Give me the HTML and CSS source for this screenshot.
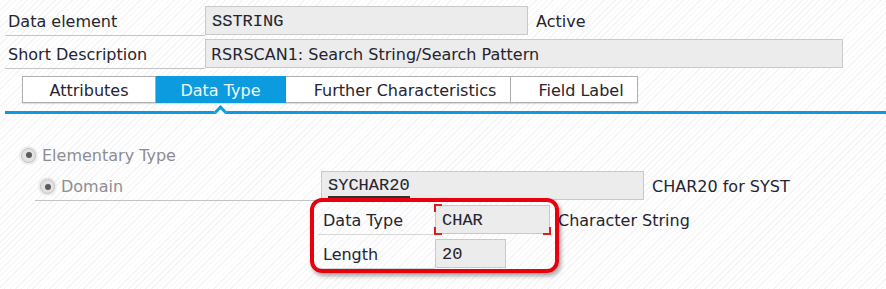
FILE: index.html
```html
<!DOCTYPE html>
<html lang="en">
  <head>
    <meta charset="UTF-8" />
    <meta name="viewport" content="width=device-width, initial-scale=1.0" />
    <title>Data element SSTRING</title>

    <link rel="stylesheet" href="styles.css">
  </head>
  <body>
    <div class="head">
      <div class="row">
        <div class="label">Data element</div>
        <div class="field mono short">SSTRING</div>
        <div class="note">Active</div>
      </div>
      <div class="row">
        <div class="label">Short Description</div>
        <div class="field long">RSRSCAN1: Search String/Search Pattern</div>
      </div>
    </div>

    <div class="tabs">
      <div class="tab t1">Attributes</div>
      <div class="tab t2 active">Data Type</div>
      <div class="tab t3">Further Characteristics</div>
      <div class="tab t4">Field Label</div>
    </div>

    <div class="panel">
      <div class="radio-row elem">
        <span class="radio"></span>
        <span>Elementary Type</span>
      </div>

      <div class="row domain">
        <div class="label">
          <span class="radio"></span>
          <span>Domain</span>
        </div>
        <div class="field mono dom"><span class="link">SYCHAR20</span></div>
        <div class="note">CHAR20 for SYST</div>
      </div>

      <div class="sub">
        <div class="row">
          <div class="label">Data Type</div>
          <div class="field mono type">
            CHAR
            <i class="c tl"></i><i class="c bl"></i><i class="c br"></i>
          </div>
          <div class="note">Character String</div>
        </div>
        <div class="row">
          <div class="label">Length</div>
          <div class="field mono len">20</div>
        </div>
        <div class="mark"></div>
      </div>
    </div>
  </body>
</html>
```

FILE: styles.css
```css
*,
*::before,
*::after {
  box-sizing: border-box;
  margin: 0;
  padding: 0;
}

body {
  width: 886px;
  height: 289px;
  overflow: hidden;
  font-family: "DejaVu Sans", sans-serif;
  font-size: 16px;
  color: #25242f;
  background: repeating-linear-gradient(-45deg, #ffffff 0 3px, #f4f4f6 3px 4px);
}

.head {
  padding: 6px 0 0 5px;
  display: flex;
  flex-direction: column;
  gap: 3px;
}

.row {
  display: flex;
  align-items: stretch;
  height: 30px;
}

.label {
  flex: none;
  width: 200px;
  padding: 2px 0 0 3px;
  display: flex;
  align-items: center;
  border-bottom: 1px solid #c4c4c4;
  white-space: nowrap;
}

.field {
  flex: none;
  display: flex;
  align-items: center;
  padding: 2px 0 0 5px;
  background: #ececec;
  border: 1px solid #c9c9c9;
  height: 29px;
}

.mono {
  font-family: "Liberation Mono", monospace;
  font-size: 17px;
  padding-left: 6px;
  -webkit-text-stroke: 0.1px #25242f;
}

.short {
  width: 323px;
}

.long {
  width: 638px;
}

.note {
  display: flex;
  align-items: center;
  padding: 2px 0 0 8px;
  height: 29px;
  white-space: nowrap;
}

/* tabs */

.tabs {
  display: flex;
  margin: 7px 0 0 22px;
  height: 27px;
}

.tab {
  display: flex;
  align-items: center;
  justify-content: center;
  padding-top: 1px;
  background: #fff;
  border: 1px solid #b0b0b0;
  border-left: none;
  box-shadow: 0 1px 1px rgba(0, 0, 0, 0.12);
}

.t1 {
  width: 134px;
  border-left: 1px solid #b0b0b0;
}

.t2 {
  width: 130px;
}

.t3 {
  width: 225px;
  padding-left: 14px;
}

.t4 {
  width: 127px;
  padding-left: 14px;
}

.tab.active {
  background: #0d9be0;
  border-color: #0d9be0;
  color: #eef8fd;
}

/* panel */

.panel {
  position: relative;
  margin: 8px 0 0 5px;
  border-top: 3px solid #0d9be0;
}

.panel::before {
  content: "";
  position: absolute;
  left: 211px;
  top: -7px;
  width: 9px;
  height: 9px;
  transform: rotate(45deg);
  border-top: 3px solid #0d9be0;
  border-left: 3px solid #0d9be0;
  background: #fff;
}

.radio-row {
  display: flex;
  align-items: center;
  gap: 6px;
  color: #8d8d93;
}

.elem {
  margin: 29px 0 0 16px;
  height: 24px;
}

.radio {
  width: 15px;
  height: 15px;
  border-radius: 50%;
  background: #e3e3e3;
  border: 1px solid #c3c3c3;
  box-shadow: 0 0 0 2px #ededed;
  display: flex;
  align-items: center;
  justify-content: center;
  flex: none;
}

.radio::after {
  content: "";
  width: 6px;
  height: 6px;
  border-radius: 50%;
  background: #5b5b5b;
}

.domain {
  margin: 4px 0 0 30px;
}

.domain .label {
  width: 286px;
  padding-left: 5px;
  gap: 6px;
  color: #8d8d93;
}

.dom {
  width: 323px;
}

.link {
  border-bottom: 2px solid #333;
  line-height: 20px;
}

.sub {
  position: relative;
  margin: 4px 0 0 313px;
  display: flex;
  flex-direction: column;
  gap: 4px;
  width: 400px;
}

.sub .label {
  width: 117px;
  padding-left: 5px;
  border-bottom: 1px solid #d6d6d6;
}

.type {
  width: 115px;
  position: relative;
}

.len {
  width: 71px;
}

.c {
  position: absolute;
  width: 8px;
  height: 8px;
  border: 0 solid #e21b1b;
}

.tl {
  left: -2px;
  top: -2px;
  border-top-width: 2px;
  border-left-width: 2px;
}

.bl {
  left: -2px;
  bottom: -2px;
  border-bottom-width: 2px;
  border-left-width: 2px;
}

.br {
  right: -2px;
  bottom: -2px;
  border-bottom-width: 2px;
  border-right-width: 2px;
}

.mark {
  position: absolute;
  left: -8px;
  top: -7px;
  width: 249px;
  height: 75px;
  border: 4px solid #e8000e;
  border-radius: 12px;
  box-shadow: 2px 3px 4px rgba(0, 0, 0, 0.35);
}
```
